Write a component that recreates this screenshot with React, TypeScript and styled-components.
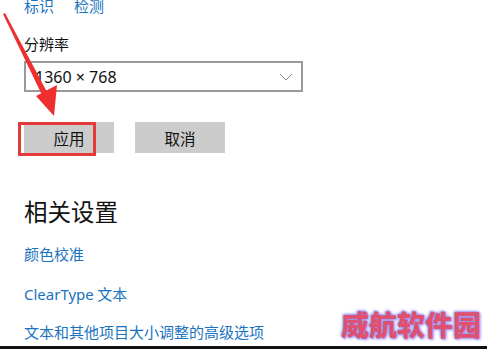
import React from 'react';
import styled, { createGlobalStyle } from 'styled-components';

const GlobalStyle = createGlobalStyle`
  html, body {
    margin: 0;
    padding: 0;
    background: #ffffff;
  }
  body {
    font-family: 'Noto Sans CJK SC', 'Noto Sans', sans-serif;
  }
`;

const Page = styled.div`
  position: relative;
  width: 487px;
  height: 349px;
  overflow: hidden;
  background: #fff;
  display: flex;
  flex-direction: column;
`;

const Content = styled.div`
  flex: 1;
  padding-left: 24px;
  display: flex;
  flex-direction: column;
`;

const TopLinks = styled.div`
  display: flex;
  gap: 20px;
  margin-top: -4px;
  height: 20px;
  font-size: 15px;
  line-height: 20px;
  color: #1a73c0;
`;

const Label = styled.div`
  margin-top: 18px;
  font-size: 15px;
  line-height: 20px;
  color: #111;
`;

const Select = styled.div`
  margin-top: 7px;
  width: 279px;
  height: 31px;
  box-sizing: border-box;
  border: 2px solid #9a9a9a;
  display: flex;
  align-items: center;
  justify-content: space-between;
  padding: 0 8px 0 9px;
  font-family: 'Noto Sans', sans-serif;
  font-size: 16px;
  color: #111;
`;

const Buttons = styled.div`
  margin-top: 30px;
  display: flex;
  gap: 21px;
`;

const Button = styled.div<{ highlight?: boolean }>`
  position: relative;
  width: 90px;
  height: 31px;
  background: #cccccc;
  display: flex;
  align-items: center;
  justify-content: center;
  font-size: 15.5px;
  color: #111;
  ${(p) =>
    p.highlight &&
    `
    &::after {
      content: '';
      position: absolute;
      left: -6px;
      top: 0;
      width: 78px;
      height: 34px;
      box-sizing: border-box;
      border: 3px solid #e53a3a;
    }
  `}
`;

const Heading = styled.div`
  margin-top: 43px;
  font-size: 23.5px;
  line-height: 30px;
  color: #111;
`;

const Link = styled.div<{ gap: number }>`
  margin-top: ${(p) => p.gap}px;
  font-size: 15px;
  line-height: 20px;
  color: #1a73c0;
`;

const Latin = styled.span`
  font-family: 'Noto Sans', sans-serif;
`;

const BottomBar = styled.div`
  height: 3px;
  background: #111;
`;

const Watermark = styled.div`
  position: absolute;
  left: 341px;
  top: 305px;
  font-size: 28px;
  font-weight: 900;
  line-height: 38px;
  color: #e0506f;
  text-shadow: 0 0 2px #8d8cf0, 1px 1px 3px #9a96f5, -1px -1px 3px #9a96f5;
`;

const Arrow = styled.svg`
  position: absolute;
  left: 0;
  top: 0;
  pointer-events: none;
`;

const Chevron = () => (
  <svg width="14" height="8" viewBox="0 0 14 8">
    <path d="M1 1 L7 7 L13 1" fill="none" stroke="#8a8a8a" strokeWidth="1" />
  </svg>
);

export default function App() {
  return (
    <>
      <GlobalStyle />
      <Page>
        <Content>
          <TopLinks>
            <span>标识</span>
            <span>检测</span>
          </TopLinks>
          <Label>分辨率</Label>
          <Select>
            <span>1360 × 768</span>
            <Chevron />
          </Select>
          <Buttons>
            <Button highlight>应用</Button>
            <Button>取消</Button>
          </Buttons>
          <Heading>相关设置</Heading>
          <Link gap={18}>颜色校准</Link>
          <Link gap={20}>
            <Latin>ClearType</Latin> 文本
          </Link>
          <Link gap={18}>文本和其他项目大小调整的高级选项</Link>
        </Content>
        <BottomBar />
        <Watermark>威航软件园</Watermark>
        <Arrow width="70" height="125" viewBox="0 0 70 125">
          <polygon points="3,14 5,13 47,92 42,95" fill="#ef2f2f" />
          <polygon points="36,96 57,85 54,116" fill="#ef2f2f" />
        </Arrow>
      </Page>
    </>
  );
}
